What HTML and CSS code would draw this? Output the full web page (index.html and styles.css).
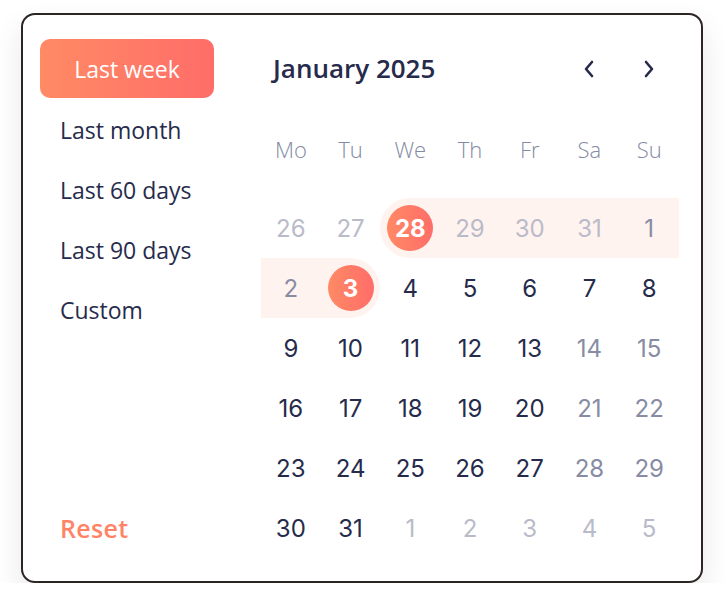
FILE: index.html
```html
<!DOCTYPE html>
<html lang="en">
<head>
    <meta charset="UTF-8">
    <meta name="viewport" content="width=device-width, initial-scale=1.0">
    <title>Date Range Picker</title>
    <link rel="stylesheet" href="styles.css">
</head>
<body>
<div class="picker">
    <aside class="presets">
        <button class="preset active">Last week</button>
        <button class="preset">Last month</button>
        <button class="preset">Last 60 days</button>
        <button class="preset">Last 90 days</button>
        <button class="preset">Custom</button>
        <button class="reset">Reset</button>
    </aside>

    <section class="calendar">
        <div class="cal-header">
            <h2 class="month">January 2025</h2>
            <div class="nav">
                <button class="nav-btn" aria-label="Previous month">
                    <svg width="12" height="18" viewBox="0 0 12 18"><path d="M9 2 L3 9 L9 16" fill="none" stroke="currentColor" stroke-width="2.6" stroke-linecap="round" stroke-linejoin="round"/></svg>
                </button>
                <button class="nav-btn" aria-label="Next month">
                    <svg width="12" height="18" viewBox="0 0 12 18"><path d="M3 2 L9 9 L3 16" fill="none" stroke="currentColor" stroke-width="2.6" stroke-linecap="round" stroke-linejoin="round"/></svg>
                </button>
            </div>
        </div>

        <div class="weekdays">
            <span>Mo</span><span>Tu</span><span>We</span><span>Th</span><span>Fr</span><span>Sa</span><span>Su</span>
        </div>

        <div class="days">
            <span class="day faint">26</span>
            <span class="day faint">27</span>
            <span class="day range range-start"><b class="dot">28</b></span>
            <span class="day range faint">29</span>
            <span class="day range faint">30</span>
            <span class="day range faint">31</span>
            <span class="day range muted">1</span>

            <span class="day range muted">2</span>
            <span class="day range range-end"><b class="dot">3</b></span>
            <span class="day">4</span>
            <span class="day">5</span>
            <span class="day">6</span>
            <span class="day">7</span>
            <span class="day">8</span>

            <span class="day">9</span>
            <span class="day">10</span>
            <span class="day">11</span>
            <span class="day">12</span>
            <span class="day">13</span>
            <span class="day muted">14</span>
            <span class="day muted">15</span>

            <span class="day">16</span>
            <span class="day">17</span>
            <span class="day">18</span>
            <span class="day">19</span>
            <span class="day">20</span>
            <span class="day muted">21</span>
            <span class="day muted">22</span>

            <span class="day">23</span>
            <span class="day">24</span>
            <span class="day">25</span>
            <span class="day">26</span>
            <span class="day">27</span>
            <span class="day muted">28</span>
            <span class="day muted">29</span>

            <span class="day">30</span>
            <span class="day">31</span>
            <span class="day faint">1</span>
            <span class="day faint">2</span>
            <span class="day faint">3</span>
            <span class="day faint">4</span>
            <span class="day faint">5</span>
        </div>
    </section>
</div>
</body>
</html>
```

FILE: styles.css
```css
body {
    margin: 0;
    background: #ffffff;
    font-family: 'Open Sans', sans-serif;
    color: #262b4b;
}

.picker {
    box-sizing: border-box;
    width: 682px;
    height: 570px;
    margin: 13px 0 0 21px;
    display: flex;
    padding: 24px 22px 22px 17px;
    border: 2px solid #2d2424;
    border-radius: 14px;
    background: #ffffff;
    box-shadow: 0 14px 30px rgba(40, 30, 30, 0.1);
}

/* left column with presets */
.presets {
    width: 174px;
    display: flex;
    flex-direction: column;
}

.preset,
.reset {
    height: 60px;
    padding: 0 0 0 20px;
    border: none;
    background: none;
    text-align: left;
    font-family: 'Open Sans', sans-serif;
    font-size: 23px;
    color: #262b4b;
    cursor: pointer;
}

.preset + .preset {
    padding-top: 2px;
}

.preset.active {
    height: 59px;
    margin-bottom: 1px;
    padding: 0;
    text-align: center;
    color: #ffffff;
    border-radius: 10px;
    background: linear-gradient(90deg, #ff8a64, #ff6d69);
}

.reset {
    margin-top: auto;
    padding-bottom: 3px;
    font-size: 25px;
    font-weight: 600;
    letter-spacing: 0.3px;
    color: #ff8466;
}

/* calendar */
.calendar {
    margin-left: 47px;
    width: 418px;
}

.cal-header {
    height: 60px;
    display: flex;
    align-items: center;
    justify-content: space-between;
}

.month {
    margin: 0 0 3px 12px;
    font-size: 26px;
    font-weight: 600;
    color: #262b4b;
}

.nav {
    display: flex;
}

.nav-btn {
    width: 60px;
    height: 60px;
    border: none;
    background: none;
    padding: 0;
    display: flex;
    align-items: center;
    justify-content: center;
    color: #262b4b;
    cursor: pointer;
}

.weekdays,
.days {
    display: grid;
    grid-template-columns: repeat(7, 1fr);
}

.weekdays {
    margin-top: 20px;
}

.weekdays span {
    height: 60px;
    display: flex;
    align-items: center;
    justify-content: center;
    font-size: 22px;
    font-weight: 300;
    color: #838aa3;
}

.days {
    margin-top: 19px;
    grid-auto-rows: 60px;
}

.day {
    display: flex;
    align-items: center;
    justify-content: center;
    font-family: Inter, sans-serif;
    font-size: 24px;
    color: #262b4b;
}

.day.muted {
    color: #878ca4;
}

.day.faint {
    color: #b9bbc9;
}

.day.range {
    background: #fff3ef;
}

.day.range-start {
    border-radius: 30px 0 0 30px;
}

.day.range-end {
    border-radius: 0 30px 30px 0;
}

.dot {
    width: 46px;
    height: 46px;
    border-radius: 50%;
    display: flex;
    align-items: center;
    justify-content: center;
    font-weight: 700;
    color: #ffffff;
    background: linear-gradient(90deg, #ff8a64, #ff6d69);
}
```
